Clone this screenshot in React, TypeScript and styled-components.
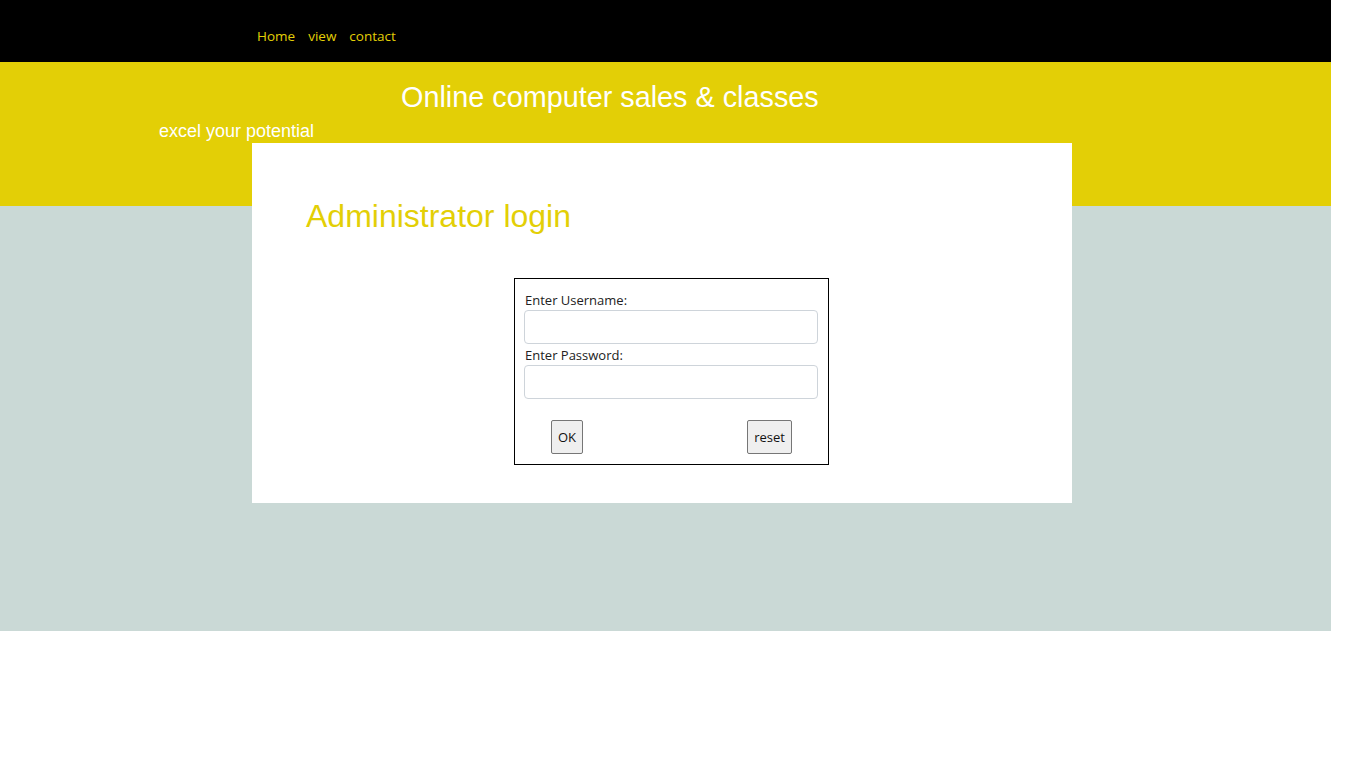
import React, { FC } from "react";
import styled, { createGlobalStyle } from "styled-components";

const YELLOW = "#e3cf06";
const SLATE = "#cad9d6";

const GlobalStyle = createGlobalStyle`
  html, body {
    margin: 0;
    padding: 0;
    background: #ffffff;
  }
  body {
    font-family: "Liberation Sans", Arial, sans-serif;
  }
`;

const Page = styled.div`
  width: 1331px;
  display: flex;
  flex-direction: column;
`;

const TopBar = styled.header`
  height: 62px;
  background: #000000;
  display: flex;
  align-items: flex-start;
  padding: 27px 0 0 257px;
  box-sizing: border-box;
  gap: 13px;
`;

const NavLink = styled.a`
  font-family: "Open Sans", "Noto Sans", sans-serif;
  font-size: 13.5px;
  color: ${YELLOW};
  text-decoration: none;
  line-height: 18px;
`;

const Hero = styled.div`
  height: 81px;
  background: ${YELLOW};
  display: flex;
  flex-direction: column;
  box-sizing: border-box;
  padding-top: 17px;
`;

const SiteTitle = styled.h1`
  margin: 0 0 0 401px;
  font-weight: normal;
  font-size: 28.8px;
  line-height: 36px;
  color: #ffffff;
`;

const Tagline = styled.div`
  margin: 4px 0 0 159px;
  font-size: 18px;
  line-height: 24px;
  color: #ffffff;
`;

const Main = styled.main`
  height: 488px;
  background: linear-gradient(to bottom, ${YELLOW} 0, ${YELLOW} 63px, ${SLATE} 63px);
  padding-left: 252px;
`;

const Card = styled.section`
  width: 820px;
  height: 360px;
  background: #ffffff;
  box-sizing: border-box;
  padding: 55px 0 0 54px;
  display: flex;
  flex-direction: column;
`;

const CardTitle = styled.h2`
  margin: 0;
  font-weight: normal;
  font-size: 32px;
  line-height: 36px;
  color: ${YELLOW};
`;

const LoginForm = styled.form`
  margin: 44px 0 0 208px;
  width: 315px;
  height: 187px;
  border: 1px solid #000000;
  box-sizing: border-box;
  padding: 12px 10px 0 10px;
  display: flex;
  flex-direction: column;
  font-family: "Open Sans", "Noto Sans", sans-serif;
`;

const FieldLabel = styled.label`
  font-size: 13px;
  line-height: 18px;
  color: #222222;
`;

const TextField = styled.input`
  width: 294px;
  height: 34px;
  box-sizing: border-box;
  border: 1px solid #ced4da;
  border-radius: 4px;
  margin: 1px 0 2px -1px;
  padding: 0 8px;
  background: #ffffff;
`;

const ButtonRow = styled.div`
  display: flex;
  justify-content: space-between;
  padding: 19px 26px 0 26px;
`;

const FormButton = styled.button`
  height: 34px;
  padding: 0 6px;
  font-family: "Open Sans", "Noto Sans", sans-serif;
  font-size: 13px;
  color: #111111;
  background: #efefef;
  border: 1px solid #767676;
  border-radius: 2px;
`;

const App: FC = () => {
  return (
    <Page>
      <GlobalStyle />
      <TopBar>
        <NavLink href="#">Home</NavLink>
        <NavLink href="#">view</NavLink>
        <NavLink href="#">contact</NavLink>
      </TopBar>

      <Hero>
        <SiteTitle>Online computer sales &amp; classes</SiteTitle>
        <Tagline>excel your potential</Tagline>
      </Hero>

      <Main>
        <Card>
          <CardTitle>Administrator login</CardTitle>
          <LoginForm onSubmit={(e) => e.preventDefault()}>
            <FieldLabel>Enter Username:</FieldLabel>
            <TextField type="text" />
            <FieldLabel>Enter Password:</FieldLabel>
            <TextField type="password" />
            <ButtonRow>
              <FormButton type="submit">OK</FormButton>
              <FormButton type="reset">reset</FormButton>
            </ButtonRow>
          </LoginForm>
        </Card>
      </Main>
    </Page>
  );
};

export default App;
